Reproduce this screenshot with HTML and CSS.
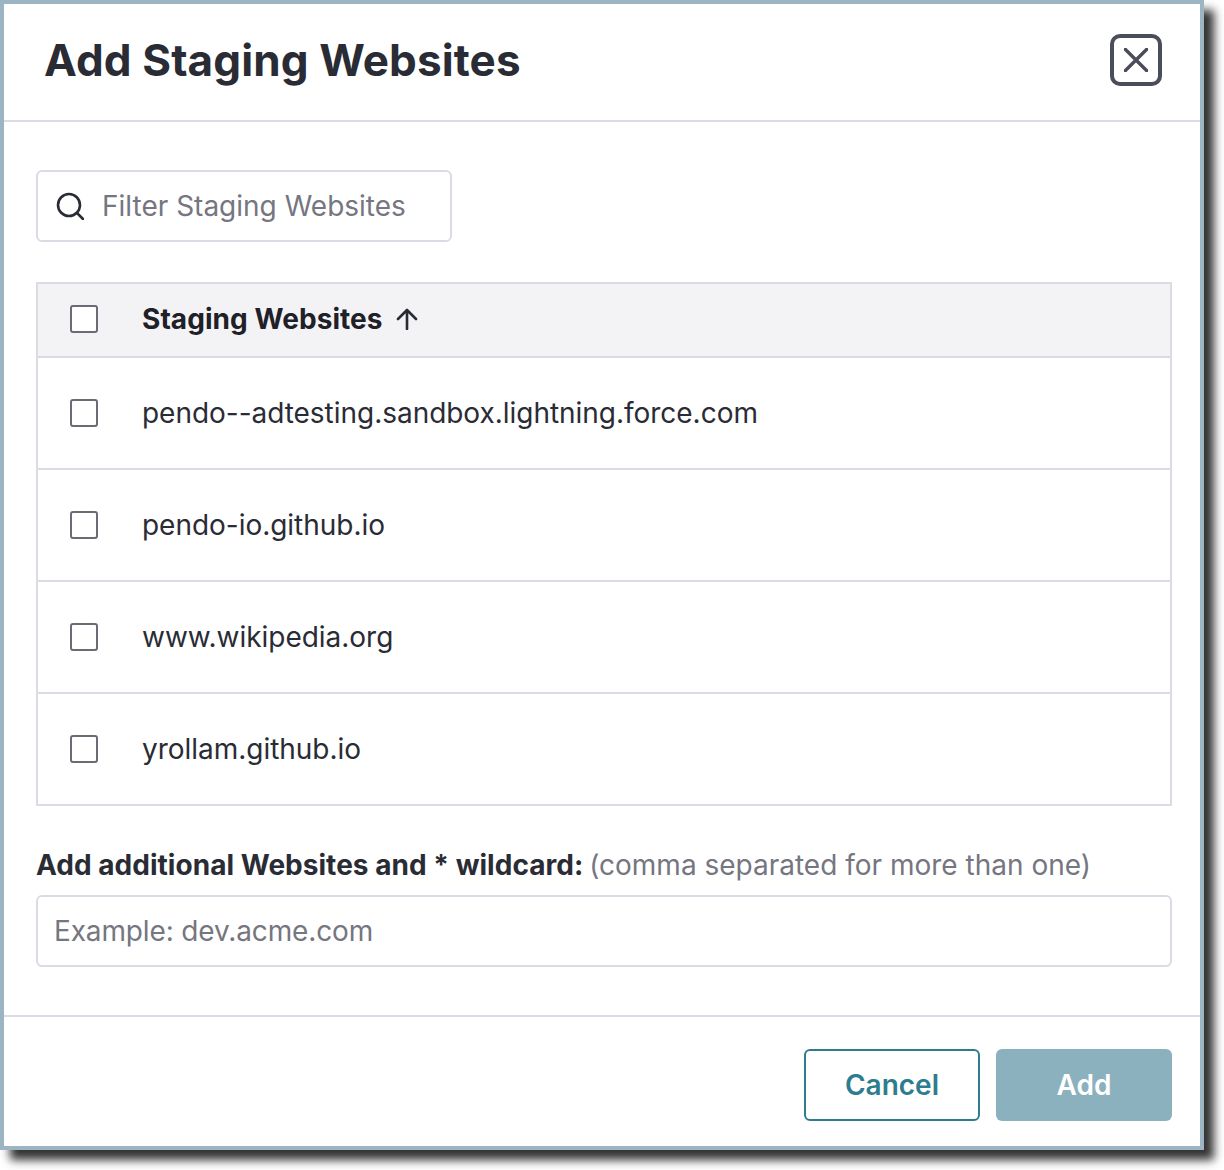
FILE: index.html
```html
<!DOCTYPE html>
<html lang="en">
<head>
<meta charset="utf-8">
<title>Add Staging Websites</title>
<link rel="stylesheet" href="styles.css">
</head>
<body>
<div class="modal">
  <header class="modal-header">
    <h1 class="modal-title">Add Staging Websites</h1>
    <button class="close-btn" aria-label="Close">
      <svg class="close-icon" viewBox="0 0 24 24" fill="none"><path d="M1 1 23 23M23 1 1 23"/></svg>
    </button>
  </header>
  <div class="modal-body">
    <div class="filter">
      <svg class="search-icon" viewBox="0 0 28 28" fill="none"><circle cx="13" cy="13" r="11"/><path d="M21 21l6 6"/></svg>
      <span class="placeholder">Filter Staging Websites</span>
    </div>
    <div class="table">
      <div class="row row-head">
        <span class="checkbox"></span>
        <span class="head-label">Staging Websites</span>
        <svg class="sort-icon" viewBox="0 0 22 22" fill="none"><path d="M11 21V2M2 11l9-9 9 9"/></svg>
      </div>
      <div class="row"><span class="checkbox"></span><span class="cell-text">pendo--adtesting.sandbox.lightning.force.com</span></div>
      <div class="row"><span class="checkbox"></span><span class="cell-text">pendo-io.github.io</span></div>
      <div class="row"><span class="checkbox"></span><span class="cell-text">www.wikipedia.org</span></div>
      <div class="row"><span class="checkbox"></span><span class="cell-text">yrollam.github.io</span></div>
    </div>
    <p class="field-label"><strong>Add additional Websites and * wildcard:</strong> <span class="hint">(comma separated for more than one)</span></p>
    <div class="text-input"><span class="placeholder placeholder-tight">Example: dev.acme.com</span></div>
  </div>
  <footer class="modal-footer">
    <button class="btn btn-cancel">Cancel</button>
    <button class="btn btn-add">Add</button>
  </footer>
</div>
</body>
</html>
```
FILE: styles.css
```css
* { box-sizing: border-box; }
html, body { margin: 0; height: 1170px; overflow: hidden; background: #fff; }
body { font-family: Inter, "Liberation Sans", sans-serif; font-size: 28px; color: #2a2c35; }
.modal {
  width: 1204px;
  height: 1150px;
  border: 4px solid #9db5c3;
  background: #fff;
  box-shadow: 10px 10px 9px rgba(0, 0, 0, .8);
  display: flex;
  flex-direction: column;
}
.modal-header {
  height: 118px;
  flex: none;
  padding: 0 38px 0 40px;
  border-bottom: 2px solid #dadce5;
  display: flex;
  align-items: center;
  justify-content: space-between;
}
.modal-title { margin: 0; font-size: 44px; line-height: 56px; font-weight: 700; color: #2a2c35; position: relative; top: -2px; letter-spacing: 0.12px; }
.close-btn {
  width: 52px; height: 52px; padding: 0;
  border: 4px solid #4b4e58; border-radius: 10px; background: #fff;
  display: flex; align-items: center; justify-content: center;
  position: relative; top: -2px;
}
.close-icon { width: 24px; height: 24px; stroke: #4b4e58; stroke-width: 3.4; stroke-linecap: round; }
.modal-body { flex: 1; padding: 48px 28px 0 32px; }
.filter {
  width: 416px; height: 72px;
  border: 2px solid #dadce5; border-radius: 6px;
  display: flex; align-items: center; gap: 18px; padding-left: 18px;
}
.search-icon { width: 28px; height: 28px; flex: none; stroke: #2a2c35; stroke-width: 2.6; stroke-linecap: round; }
.placeholder { color: #75767f; }
.placeholder-tight { letter-spacing: -0.14px; }
.table { margin-top: 40px; border: 2px solid #dadce5; border-bottom-width: 0; }
.row {
  height: 112px;
  border-bottom: 2px solid #dadce5;
  display: flex; align-items: center; gap: 44px; padding-left: 32px;
  color: #2a2c35;
}
.cell-text { letter-spacing: -0.03px; }
.row-head { height: 74px; padding-bottom: 2px; background: #f3f3f6; }
.head-label { font-weight: 700; color: #1f2028; line-height: 32px; letter-spacing: 0.06px; }
.sort-icon { width: 22px; height: 22px; margin-left: -31px; stroke: #2a2c35; stroke-width: 2.6; stroke-linecap: round; stroke-linejoin: round; }
.checkbox { width: 28px; height: 28px; flex: none; background: #fff; border: 2px solid #6a6c75; border-radius: 3px; }
.field-label { margin: 42px 0 13px; line-height: 34px; white-space: nowrap; }
.field-label strong { font-weight: 700; color: #2a2c35; letter-spacing: 0.03px; }
.hint { color: #75767f; margin-left: -2px; }
.text-input {
  height: 72px; border: 2px solid #dadce5; border-radius: 6px;
  display: flex; align-items: center; padding-left: 16px;
}
.modal-footer {
  height: 131px; flex: none;
  border-top: 2px solid #dadce5;
  padding: 32px 28px 0 0;
  display: flex; justify-content: flex-end; gap: 16px;
}
.btn { width: 176px; height: 72px; border-radius: 6px; font: 600 28px Inter, "Liberation Sans", sans-serif; padding: 0; }
.btn-cancel { background: #fff; border: 2px solid #2d7d8f; color: #2d7d8f; }
.btn-add { background: #8bb1bf; border: 0; color: #fff; }
```
